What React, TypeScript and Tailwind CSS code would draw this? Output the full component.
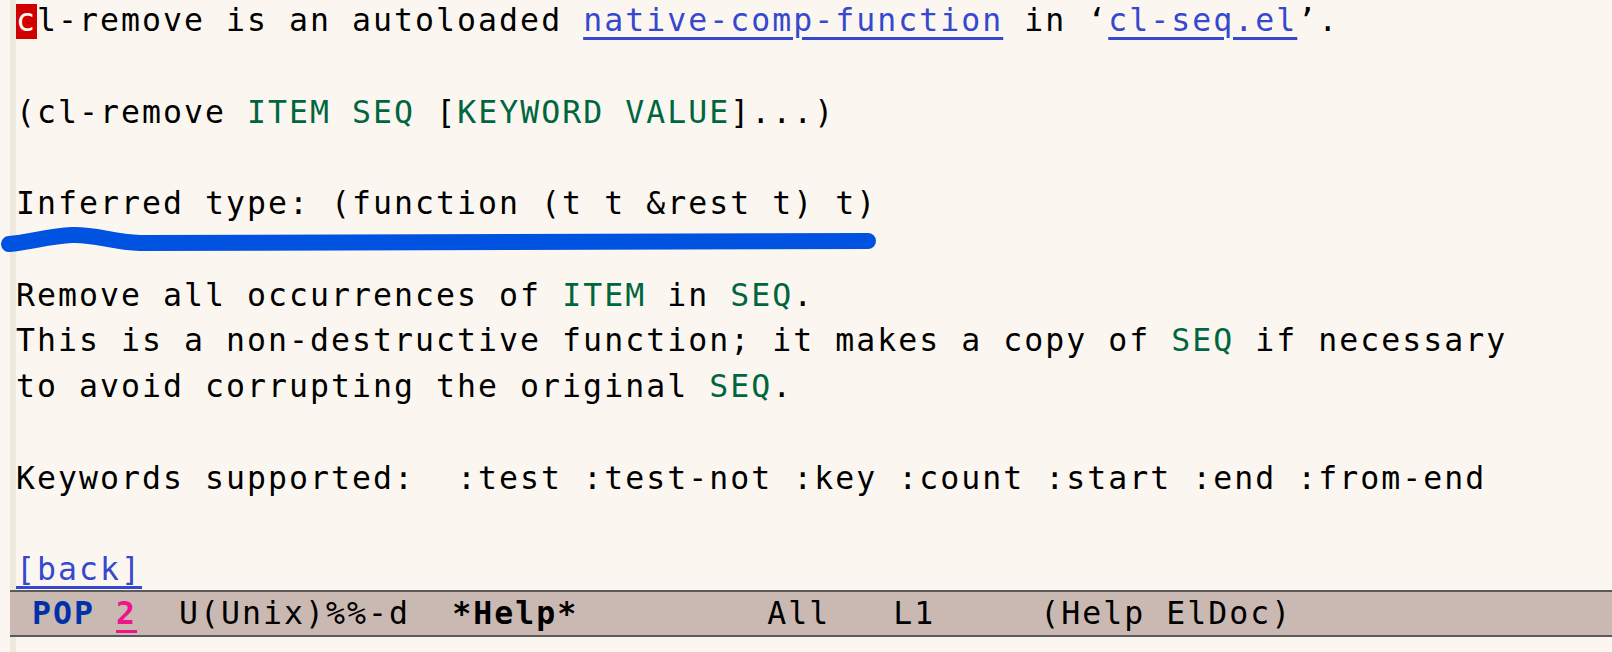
import React from "react";

const G = ({ children }: { children: React.ReactNode }) => (
  <span className="text-[#00663f]">{children}</span>
);

const Link = ({ children }: { children: React.ReactNode }) => (
  <span className="text-[#3548cf] underline decoration-[2.5px] underline-offset-[6px]">{children}</span>
);

const Line = ({ children }: { children?: React.ReactNode }) => (
  <div className="h-[45.75px] shrink-0 whitespace-pre leading-[40px]">{children}</div>
);

export default function App() {
  return (
    <div className="relative flex h-[652px] w-[1612px] overflow-hidden bg-[#fbf7f0] font-['DejaVu_Sans_Mono',monospace] text-[31.5px] tracking-[2.04px] text-black">
      <div className="w-[10px] shrink-0" />
      <div className="flex min-w-0 flex-1 flex-col">
        <div className="flex h-[590px] shrink-0 overflow-hidden">
          <div className="w-[6px] shrink-0 bg-[#efe9dd]" />
          <div className="flex flex-1 flex-col">
            <Line>
              <span className="inline-block h-[35px] bg-[#d00000] leading-[32px] text-[#fbf7f0]">c</span>
              l-remove is an autoloaded <Link>native-comp-function</Link> in ‘<Link>cl-seq.el</Link>’.
            </Line>
            <Line />
            <Line>
              (cl-remove <G>ITEM</G> <G>SEQ</G> [<G>KEYWORD VALUE</G>]...)
            </Line>
            <Line />
            <Line>Inferred type: (function (t t &rest t) t)</Line>
            <Line />
            <Line>
              Remove all occurrences of <G>ITEM</G> in <G>SEQ</G>.
            </Line>
            <Line>
              This is a non-destructive function; it makes a copy of <G>SEQ</G> if necessary
            </Line>
            <Line>
              to avoid corrupting the original <G>SEQ</G>.
            </Line>
            <Line />
            <Line>Keywords supported:  :test :test-not :key :count :start :end :from-end</Line>
            <Line />
            <Line>
              <Link>[back]</Link>
            </Line>
          </div>
        </div>

        {/* mode line */}
        <div className="flex h-[47px] shrink-0 items-center whitespace-pre border-y-2 border-[#5a5a5a] bg-[#cab9b2] pl-[1px] leading-[43px]">
          <span> </span>
          <span className="font-bold text-[#0031a9]">POP</span>
          <span> </span>
          <span className="font-bold text-[#ee1489] underline decoration-[3px] underline-offset-[6px]">2</span>
          <span>  U(Unix)%%-d  </span>
          <span className="font-bold">*Help*</span>
          <span>         All   L1     (Help ElDoc)</span>
        </div>

        <div className="flex flex-1">
          <div className="w-[6px] shrink-0 bg-[#efe9dd]" />
        </div>
      </div>

      {/* hand-drawn highlight stroke */}
      <svg className="pointer-events-none absolute left-0 top-0" width="900" height="280" viewBox="0 0 900 280">
        <path
          d="M 9 244 C 30 242, 50 236, 72 235 C 95 234, 112 242, 140 243 L 868 241"
          fill="none"
          stroke="#0052e0"
          strokeWidth="16"
          strokeLinecap="round"
          strokeLinejoin="round"
        />
      </svg>
    </div>
  );
}
